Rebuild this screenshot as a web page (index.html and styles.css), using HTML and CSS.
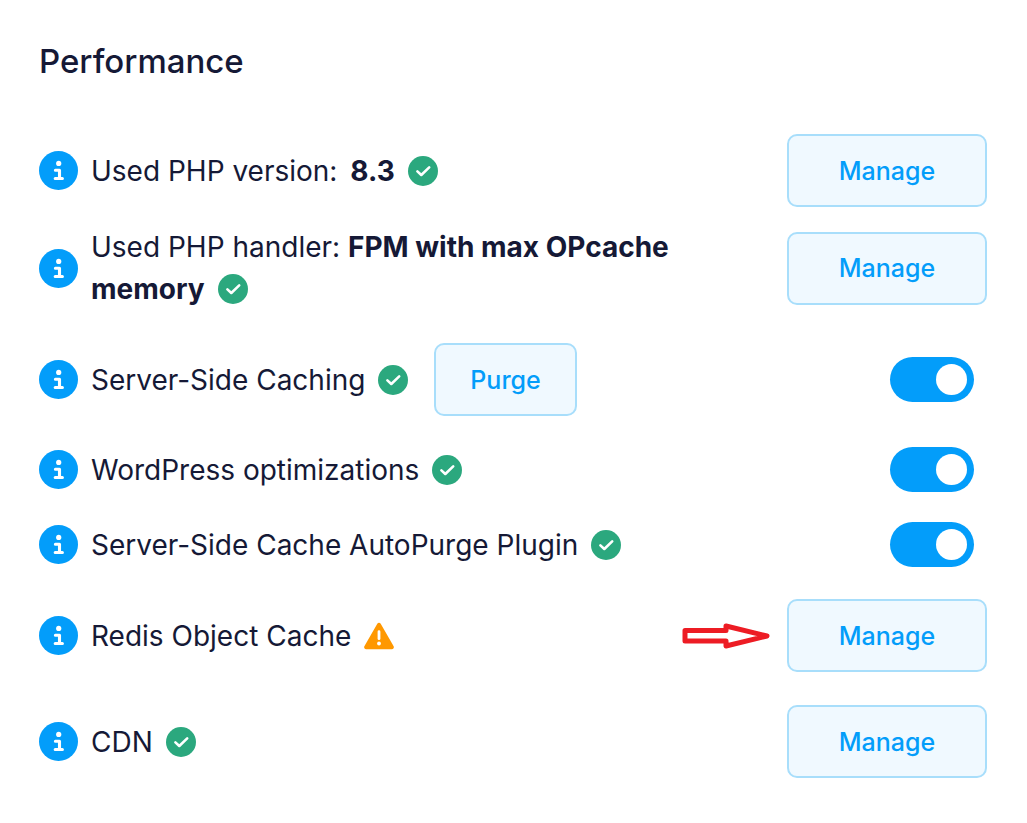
FILE: index.html
```html
<!DOCTYPE html>
<html lang="en">
<head>
  <meta charset="UTF-8" />
  <meta name="viewport" content="width=device-width, initial-scale=1.0"/>
  <title>Performance</title>
  <link rel="stylesheet" href="styles.css">
</head>
<body>
  <!-- Shared icons -->
  <svg class="sprite" aria-hidden="true">
    <symbol id="info" viewBox="0 0 39 39">
      <circle cx="19.5" cy="19.5" r="19.5" fill="#039dfa"/>
      <circle cx="19.7" cy="12.4" r="2.6" fill="#fff"/>
      <path d="M16.4 19.3h4.1v8M16.200 27.500h7.2" fill="none" stroke="#fff" stroke-width="3.1" stroke-linecap="round" stroke-linejoin="round"/>
    </symbol>
    <symbol id="check" viewBox="0 0 30 30">
      <circle cx="15" cy="15" r="15" fill="#2ba87e"/>
      <path d="M9.4 15.400l3.900 3.600 7.900-7.600" fill="none" stroke="#fff" stroke-width="2.6" stroke-linecap="round" stroke-linejoin="round"/>
    </symbol>
    <symbol id="warning" viewBox="0 0 30 27">
      <path d="M13.3 1.2a2 2 0 0 1 3.4 0l12.8 22.4a2 2 0 0 1-1.7 3.1H2.2a2 2 0 0 1-1.7-3.1z" fill="#ff9800"/>
      <path d="M15 9.2v7" stroke="#fff" stroke-width="2.8" stroke-linecap="round"/>
      <circle cx="15" cy="21" r="1.9" fill="#fff"/>
    </symbol>
  </svg>

  <main class="panel">
    <h2>Performance</h2>

    <div class="row row-first">
      <button class="info-btn" type="button" aria-label="About PHP version"><svg><use href="#info"/></svg></button>
      <p class="text">Used PHP version: <b class="version">8.3</b> <svg class="status"><use href="#check"/></svg></p>
      <button class="btn btn-manage" type="button">Manage</button>
    </div>

    <div class="row">
      <button class="info-btn" type="button" aria-label="About PHP handler"><svg><use href="#info"/></svg></button>
      <p class="text">Used PHP handler: <b>FPM with max OPcache memory</b> <svg class="status"><use href="#check"/></svg></p>
      <button class="btn btn-manage" type="button">Manage</button>
    </div>

    <div class="row">
      <button class="info-btn" type="button" aria-label="About server-side caching"><svg><use href="#info"/></svg></button>
      <div class="text text-group">
        <label for="caching">Server-Side Caching <svg class="status"><use href="#check"/></svg></label>
        <button class="btn" type="button">Purge</button>
      </div>
      <input class="toggle" type="checkbox" id="caching" checked>
    </div>

    <div class="row row-toggle">
      <button class="info-btn" type="button" aria-label="About WordPress optimizations"><svg><use href="#info"/></svg></button>
      <label class="text" for="optimizations">WordPress optimizations <svg class="status"><use href="#check"/></svg></label>
      <input class="toggle" type="checkbox" id="optimizations" checked>
    </div>

    <div class="row row-toggle">
      <button class="info-btn" type="button" aria-label="About AutoPurge plugin"><svg><use href="#info"/></svg></button>
      <label class="text" for="autopurge">Server-Side Cache AutoPurge Plugin <svg class="status"><use href="#check"/></svg></label>
      <input class="toggle" type="checkbox" id="autopurge" checked>
    </div>

    <div class="row">
      <button class="info-btn" type="button" aria-label="About Redis Object Cache"><svg><use href="#info"/></svg></button>
      <p class="text">Redis Object Cache <svg class="status"><use href="#warning"/></svg></p>
      <svg class="arrow" viewBox="0 0 88 26" aria-hidden="true">
        <path d="M3 7.500h41V3l41 10-41 10v-5H3z" fill="#fff" stroke="#ed1c24" stroke-width="5" stroke-linejoin="round"/>
      </svg>
      <button class="btn btn-manage" type="button">Manage</button>
    </div>

    <div class="row">
      <button class="info-btn" type="button" aria-label="About CDN"><svg><use href="#info"/></svg></button>
      <p class="text">CDN <svg class="status"><use href="#check"/></svg></p>
      <button class="btn btn-manage" type="button">Manage</button>
    </div>
  </main>
</body>
</html>
```
FILE: styles.css
```css
* {
  box-sizing: border-box;
  font-family: 'Inter', sans-serif;
  margin: 0;
  padding: 0;
}

body {
  background-color: #fff;
  color: #151936;
  font-size: 28px;
  line-height: 42px;
}

.sprite {
  display: none;
}

.panel {
  padding: 40px 40px 28px 39px;
}

h2 {
  font-size: 33px;
  font-weight: 500;
  margin-bottom: 36px;
}

.row {
  display: flex;
  align-items: center;
  gap: 13px;
  padding: 16px 0 17px;
}

/* the two PHP rows sit closer together */
.row-first {
  padding-bottom: 3px;
}

.row-toggle {
  padding: 14px 0 16px;
}

.info-btn {
  flex: none;
  width: 39px;
  height: 39px;
  border: none;
  border-radius: 50%;
  background: none;
  cursor: pointer;
}

.info-btn svg {
  display: block;
  width: 39px;
  height: 39px;
}

.text {
  flex: 1;
  padding-right: 80px;
}

.text-group {
  display: flex;
  align-items: center;
  gap: 26px;
}

.version {
  margin-left: 5px;
}

.status {
  width: 30px;
  height: 30px;
  margin-left: 5px;
  vertical-align: -5px;
}

.btn {
  height: 73px;
  padding: 0 34px;
  background-color: #f0f9ff;
  border: 2px solid #a8defb;
  border-radius: 10px;
  color: #039dfa;
  font-size: 25px;
  font-weight: 500;
  cursor: pointer;
}

.btn:hover {
  background-color: #dff2ff;
}

.btn-manage {
  flex: none;
  width: 200px;
}

.toggle {
  appearance: none;
  flex: none;
  display: flex;
  align-items: center;
  width: 84px;
  height: 45px;
  margin-right: 13px;
  padding: 0 7px;
  border-radius: 23px;
  background-color: #b8c0cc;
  cursor: pointer;
}

.toggle::before {
  content: "";
  width: 31px;
  height: 31px;
  border-radius: 50%;
  background-color: #fff;
}

.toggle:checked {
  justify-content: flex-end;
  background-color: #039dfa;
}

.arrow {
  flex: none;
  width: 88px;
  height: 26px;
  margin-right: 4px;
}
```
